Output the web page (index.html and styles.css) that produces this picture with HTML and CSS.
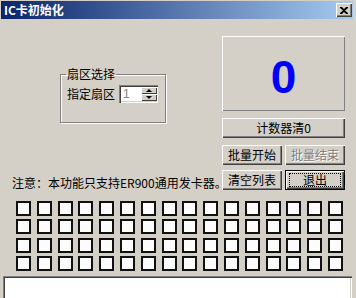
FILE: index.html
```html
<!DOCTYPE html>
<html lang="zh-CN">
  <head>
    <meta charset="UTF-8" />
    <title>IC卡初始化</title>
    <link rel="stylesheet" href="styles.css">
  </head>
  <body>
    <div class="window">
      <div class="titlebar">
        <span class="title">IC卡初始化</span>
        <span class="close-btn">
          <svg width="8" height="7" viewBox="0 0 8 7">
            <path d="M0 0h2l2 2 2-2h2v1L5 3.5 8 6v1H6L4 5 2 7H0V6l3-2.5L0 1z" fill="#000"/>
          </svg>
        </span>
      </div>

      <div class="main">
        <div class="left">
          <fieldset class="group">
            <legend>扇区选择</legend>
            <div class="sector-row">
              <span>指定扇区</span>
              <div class="spin">
                <span class="spin-value">1</span>
                <span class="spin-arrows">
                  <span class="arrow up"></span>
                  <span class="arrow down"></span>
                </span>
              </div>
            </div>
          </fieldset>
          <div class="note">注意：本功能只支持ER900通用发卡器。</div>
        </div>

        <div class="right">
          <div class="counter">0</div>
          <div class="btn wide">计数器清0</div>
          <div class="btn-row">
            <div class="btn">批量开始</div>
            <div class="btn disabled">批量结束</div>
          </div>
          <div class="btn-row second">
            <div class="btn">清空列表</div>
            <div class="btn default"><span class="focus">退出</span></div>
          </div>
        </div>
      </div>

      <div class="cards" id="cards"></div>

      <div class="log"></div>
    </div>

    <script>
      const cards = document.getElementById("cards");
      for (let i = 0; i < 64; i++) {
        const cell = document.createElement("div");
        cell.className = "card";
        cards.appendChild(cell);
      }
    </script>
  </body>
</html>
```

FILE: styles.css
```css
body {
  margin: 0;
  background-color: #d4d0c8;
  overflow: hidden;
}
.window {
  width: 356px;
  height: 298px;
  padding-top: 1px;
  box-sizing: border-box;
  background-color: #d4d0c8;
  font-family: "Noto Sans CJK SC", "DejaVu Sans", sans-serif;
  font-size: 12px;
  color: #000;
  overflow: hidden;
}
.titlebar {
  height: 18px;
  margin: 0 3px 0 1px;
  padding: 0 1px 0 3px;
  display: flex;
  align-items: center;
  justify-content: space-between;
  background: linear-gradient(to right, #0a246a, #a6caf0);
}
.title {
  color: #fff;
  font-weight: bold;
  line-height: 12px;
}
.close-btn {
  width: 16px;
  height: 14px;
  display: flex;
  align-items: center;
  justify-content: center;
  background-color: #d4d0c8;
  box-shadow: inset 1px 1px #fff, inset -1px -1px #404040, inset -2px -2px #808080;
}
.main {
  display: flex;
  padding: 17px 0 0 3px;
}
.left {
  width: 219px;
  height: 154px;
  display: flex;
  flex-direction: column;
}
.group {
  width: 106px;
  height: 55px;
  box-sizing: border-box;
  margin: 32px 0 0 57px;
  padding: 0 0 0 6px;
  border: 1px solid #808080;
  box-shadow: inset 1px 1px #fff, 1px 1px #fff;
}
.group legend {
  padding: 0 1px;
  line-height: 12px;
  margin-left: -1px;
}
.sector-row {
  display: flex;
  align-items: center;
  margin-top: 5px;
  height: 18px;
}
.sector-row span {
  line-height: 12px;
}
.spin {
  width: 39px;
  height: 18px;
  margin-left: 4px;
  box-sizing: border-box;
  display: flex;
  align-items: center;
  justify-content: space-between;
  padding: 2px 1px 2px 4px;
  background-color: #fff;
  box-shadow: inset 1px 1px #808080, inset 2px 2px #404040, inset -1px -1px #fff, inset -2px -2px #d4d0c8;
}
.spin-value {
  color: #808080;
  font-family: "Liberation Sans", sans-serif;
  line-height: 12px;
}
.spin-arrows {
  width: 16px;
  height: 14px;
  display: flex;
  flex-direction: column;
}
.arrow {
  flex: 1;
  display: flex;
  align-items: center;
  justify-content: center;
  background-color: #d4d0c8;
  box-shadow: inset 1px 1px #fff, inset -1px -1px #404040;
}
.arrow::after {
  content: "";
  border-left: 3px solid transparent;
  border-right: 3px solid transparent;
}
.arrow.up::after {
  border-bottom: 3px solid #000;
}
.arrow.down::after {
  border-top: 3px solid #000;
}
.note {
  margin-top: auto;
  padding-left: 9px;
  line-height: 14px;
  white-space: nowrap;
}
.right {
  width: 123px;
}
.counter {
  height: 75px;
  box-sizing: border-box;
  padding-top: 6px;
  display: flex;
  align-items: center;
  justify-content: center;
  box-shadow: inset 1px 1px #fff, inset -1px -1px #808080;
  color: #0000ff;
  font-family: "Liberation Sans", sans-serif;
  font-weight: bold;
  font-size: 46px;
}
.btn {
  height: 20px;
  width: 60px;
  box-sizing: border-box;
  display: flex;
  align-items: center;
  justify-content: center;
  background-color: #d4d0c8;
  box-shadow: inset 1px 1px #fff, inset -1px -1px #404040, inset -2px -2px #808080;
  line-height: 12px;
}
.btn.wide {
  width: 123px;
  margin-top: 7px;
}
.btn-row {
  display: flex;
  gap: 3px;
  margin-top: 7px;
}
.btn-row.second {
  margin-top: 5px;
}
.btn.disabled {
  color: #808080;
  text-shadow: 1px 1px #fff;
}
.btn.default {
  border: 1px solid #000;
}
.focus {
  width: 50px;
  height: 12px;
  display: flex;
  align-items: center;
  justify-content: center;
  outline: 1px dotted #000;
}
.cards {
  width: 327px;
  height: 70px;
  margin: 11px 0 0 16px;
  display: grid;
  grid-template-columns: repeat(16, 15px);
  grid-template-rows: repeat(4, 15px);
  justify-content: space-between;
  align-content: space-between;
}
.card {
  box-sizing: border-box;
  border: 2px solid #111;
  background-color: #fcfcfc;
}
.log {
  width: 349px;
  height: 30px;
  margin: 5px 0 0 3px;
  background-color: #fff;
  box-shadow: inset 1px 1px #808080, inset 2px 2px #404040, inset -1px -1px #fff, inset -2px -2px #d4d0c8;
}
```
